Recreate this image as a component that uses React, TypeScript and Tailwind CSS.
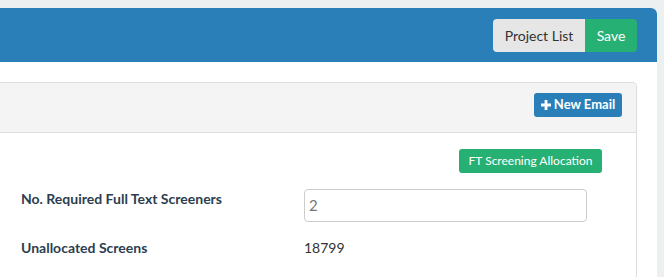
import React from "react"

function Plus() {
  return (
    <svg width="10" height="10" viewBox="0 0 10 10" aria-hidden className="shrink-0">
      <path d="M3.6 0h2.8v3.6H10v2.8H6.4V10H3.6V6.4H0V3.6h3.6z" fill="currentColor" />
    </svg>
  )
}

export default function App() {
  return (
    <div className="h-[277px] overflow-hidden bg-[#ecf0f1] pt-2 font-['Lato','Liberation_Sans',sans-serif] text-[#2c3e50]">
      <div className="h-full w-[657px] rounded-tr-md bg-white">
        <header className="flex h-[54px] items-center justify-end rounded-tr-md bg-[#2a7fb8] pr-5">
          <div className="flex h-[33px]">
            <button
              type="button"
              className="flex w-[92px] items-center justify-center rounded-l-[4px] bg-[#e6e6e6] text-[14px] text-[#333]"
            >
              Project List
            </button>
            <button
              type="button"
              className="flex w-[52px] items-center justify-center rounded-r-[4px] bg-[#27b073] text-[14px] text-white"
            >
              Save
            </button>
          </div>
        </header>

        <section className="mt-5 ml-[-1px] mr-5 rounded-tr-[4px] border border-[#ddd]">
          <div className="flex h-[50px] items-start justify-end rounded-tr-[4px] border-b border-[#ddd] bg-[#f4f4f4] pt-[10px] pr-[14px]">
            <button
              type="button"
              className="flex h-6 w-[88px] items-center justify-center gap-[3px] rounded-[3px] bg-[#2a7fb8] text-[13px] font-bold text-white"
            >
              <Plus />
              New Email
            </button>
          </div>

          <div className="pt-4 pr-[34px] pb-10">
            <div className="flex justify-end">
              <button
                type="button"
                className="flex h-6 w-[143px] items-center justify-center rounded-[3px] bg-[#27b073] text-[12px] text-white"
              >
                FT Screening Allocation
              </button>
            </div>

            <div className="mt-4 flex">
              <div className="w-[304px] pl-[21px] text-[14px] leading-5 font-bold">No. Required Full Text Screeners</div>
              <div className="flex h-[33px] w-[283px] items-center rounded-[4px] border border-[#ccc] px-1 text-[15px] text-[#777]">
                2
              </div>
            </div>

            <div className="mt-4 flex">
              <div className="w-[304px] pl-[21px] text-[14px] leading-5 font-bold">Unallocated Screens</div>
              <div className="text-[14px] leading-5 text-[#333]">18799</div>
            </div>
          </div>
        </section>
      </div>
    </div>
  )
}
